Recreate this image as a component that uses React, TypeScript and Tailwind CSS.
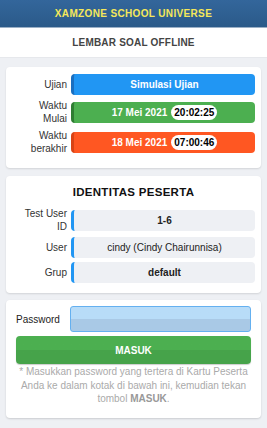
export default function App() {
  const font = { fontFamily: '"Liberation Sans", Arial, sans-serif' };
  return (
    <div className="min-h-[428px] w-[267px] bg-[#eef0f4]" style={font}>
      <div className="flex h-[28px] items-center justify-center border-b border-[#9bb0c6] bg-gradient-to-b from-[#33669b] to-[#2b5a89]">
        <span className="text-[10px] font-bold tracking-[0.35px] text-[#f5e85a]">XAMZONE SCHOOL UNIVERSE</span>
      </div>
      <div className="flex h-[30px] items-center justify-center border-b border-[#e6e8ec] bg-white">
        <span className="text-[10px] font-bold tracking-[0.2px] text-[#444]">LEMBAR SOAL OFFLINE</span>
      </div>

      <div className="mx-[6px] mt-[9px] rounded-[4px] bg-white px-[6px] pb-[13px] pt-[7px] shadow-[0_1px_2px_rgba(0,0,0,0.12)]">
        <div className="flex flex-col gap-[4px]">
          <Row label="Ujian">
            <Bar color="bg-[#2196f3] border-[#1a6fc0]">Simulasi Ujian</Bar>
          </Row>
          <Row label={<>Waktu<br />Mulai</>}>
            <Bar color="bg-[#4caf50] border-[#2e7d32]">
              17 Mei 2021
              <span className="ml-[4px] rounded-full bg-white px-[3px] leading-[15px] text-black">20:02:25</span>
            </Bar>
          </Row>
          <Row label={<>Waktu<br />berakhir</>}>
            <Bar color="bg-[#ff5722] border-[#d84315]">
              18 Mei 2021
              <span className="ml-[4px] rounded-full bg-white px-[3px] leading-[15px] text-black">07:00:46</span>
            </Bar>
          </Row>
        </div>
      </div>

      <div className="mx-[6px] mt-[8px] rounded-[4px] bg-white px-[6px] pb-[10px] pt-[9px] shadow-[0_1px_2px_rgba(0,0,0,0.12)]">
        <div className="mb-[8px] text-center text-[11.5px] font-bold leading-[14px] tracking-[0.3px] text-[#111]">IDENTITAS PESERTA</div>
        <div className="flex flex-col gap-[4px]">
          <Row label={<>Test User<br />ID</>}>
            <Field bold>1-6</Field>
          </Row>
          <Row label="User">
            <Field>cindy (Cindy Chairunnisa)</Field>
          </Row>
          <Row label="Grup">
            <Field bold>default</Field>
          </Row>
        </div>
      </div>

      <div className="mx-[6px] mt-[7px] rounded-[4px] bg-white px-[10px] pb-[12px] pt-[6px] shadow-[0_1px_2px_rgba(0,0,0,0.15)]">
        <div className="flex items-center">
          <span className="w-[54px] text-[10px] text-[#222]">Password</span>
          <div className="h-[26px] flex-1 rounded-[3px] border border-[#64b0f0] bg-gradient-to-b from-[#b8dcf8] from-50% to-[#a9c9e6] to-50%" />
        </div>
        <button className="mt-[4px] flex h-[28px] w-full items-center justify-center rounded-[4px] bg-gradient-to-b from-[#4caf50] from-50% to-[#46a34a] to-50% text-[10px] font-bold text-white shadow-[0_1px_1px_rgba(0,0,0,0.2)]">
          MASUK
        </button>
        <p className="mt-[1px] text-center text-[10px] leading-[13.5px] text-[#aaa]">
          * Masukkan password yang tertera di Kartu Peserta Anda ke dalam kotak di bawah ini, kemudian tekan tombol <b className="text-[#999]">MASUK</b>.
        </p>
      </div>
    </div>
  );
}

function Row({ label, children }: { label: React.ReactNode; children: React.ReactNode }) {
  return (
    <div className="flex items-center gap-[4px]">
      <div className="w-[55px] text-right text-[10px] leading-[13px] text-[#333]">{label}</div>
      <div className="flex-1">{children}</div>
    </div>
  );
}

function Bar({ color, children }: { color: string; children: React.ReactNode }) {
  return (
    <div className={`flex h-[21px] items-center justify-center rounded-[4px] border-l-[3px] text-[10px] font-bold text-white ${color}`}>
      {children}
    </div>
  );
}

function Field({ bold, children }: { bold?: boolean; children: React.ReactNode }) {
  return (
    <div className={`flex h-[21px] items-center justify-center rounded-[4px] border-l-[3px] border-[#2196f3] bg-[#eef0f4] text-[10px] text-[#222] ${bold ? "font-bold" : ""}`}>
      {children}
    </div>
  );
}
